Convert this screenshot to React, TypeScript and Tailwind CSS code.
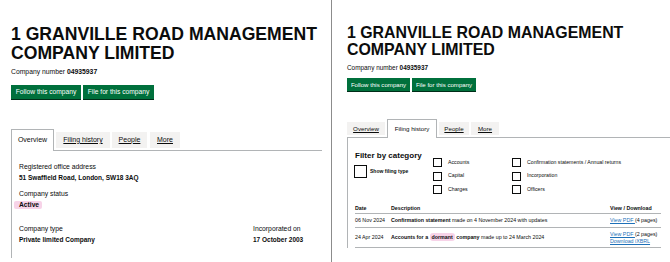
import React from 'react';

const ink = 'text-[#0b0c0c]';

function GreenButton({ label, className }: { label: string; className: string }) {
  return (
    <span
      className={`flex items-center justify-center whitespace-nowrap bg-[#00703c] text-white shadow-[0_1px_0_#002d18] ${className}`}
    >
      {label}
    </span>
  );
}

function Tab({ label, selected, className }: { label: string; selected?: boolean; className: string }) {
  if (selected) {
    return (
      <span
        className={`-mb-px flex items-center justify-center whitespace-nowrap border border-b-0 border-[#b1b4b6] bg-white ${className}`}
      >
        {label}
      </span>
    );
  }
  return (
    <span className={`flex items-center justify-center whitespace-nowrap bg-[#f3f2f1] underline underline-offset-[1px] ${className}`}>
      {label}
    </span>
  );
}

function Box({ size }: { size: string }) {
  return <span className={`shrink-0 border border-[#0b0c0c] bg-white ${size}`} />;
}

function OverviewPanel() {
  return (
    <div className="w-[331px] shrink-0 pl-[11px] pr-[9px] pt-[25px]">
      <h1 className="text-[17.6px] font-bold leading-[19px]">1 GRANVILLE ROAD MANAGEMENT COMPANY LIMITED</h1>
      <p className="mt-[4px] text-[6.8px] leading-[10px]">
        Company number <strong>04935937</strong>
      </p>
      <div className="mt-[8px] flex gap-[2px] text-[6.7px]">
        <GreenButton label="Follow this company" className="h-[14px] w-[70px]" />
        <GreenButton label="File for this company" className="h-[14px] w-[71px]" />
      </div>

      <div className="mt-[30px] flex items-end border-b border-[#b1b4b6] text-[7px]">
        <Tab label="Overview" selected className="h-[22px] w-[43px]" />
        <Tab label="Filing history" className="mb-[2px] ml-[2px] h-[16px] w-[54px]" />
        <Tab label="People" className="mb-[2px] ml-[2px] h-[16px] w-[35px]" />
        <Tab label="More" className="mb-[2px] ml-[3px] h-[16px] w-[30px]" />
      </div>

      <div className="border-l border-[#b1b4b6] pb-[13px] pl-[7px] pt-[10px] text-[6.8px] leading-[11px]">
        <div>Registered office address</div>
        <div className="text-[6.5px] font-bold">51 Swaffield Road, London, SW18 3AQ</div>
        <div className="mt-[5px]">Company status</div>
        <div className="text-[6.7px] font-bold">
          <span className="-ml-[5px] inline-block rounded-[2px] bg-[#f7d3e8] pl-[5px] pr-[3px] leading-[7.5px]">Active</span>
        </div>
        <div className="mt-[13px] flex">
          <div className="w-[234px]">
            <div>Company type</div>
            <div className="text-[6.5px] font-bold">Private limited Company</div>
          </div>
          <div>
            <div>Incorporated on</div>
            <div className="text-[6.5px] font-bold">17 October 2003</div>
          </div>
        </div>
      </div>
    </div>
  );
}

const categories = [
  ['Accounts', 'Capital', 'Charges'],
  ['Confirmation statements / Annual returns', 'Incorporation', 'Officers'],
];

function Link({ children }: { children: React.ReactNode }) {
  return <span className="text-[#1d70b8] underline underline-offset-[1px]">{children}</span>;
}

function FilingPanel() {
  return (
    <div className="min-w-0 flex-1 overflow-hidden pl-[15px] pt-[25px]">
      <div className="w-[333px]">
        <h1 className="text-[15.9px] font-bold leading-[16.5px]">1 GRANVILLE ROAD MANAGEMENT COMPANY LIMITED</h1>
        <p className="mt-[5px] text-[6.4px] leading-[9px]">
          Company number <strong>04935937</strong>
        </p>
        <div className="mt-[6px] flex gap-[2px] text-[6.1px]">
          <GreenButton label="Follow this company" className="h-[13px] w-[63px]" />
          <GreenButton label="File for this company" className="h-[13px] w-[64px]" />
        </div>

        <div className="mt-[28px] flex items-end border-b border-[#b1b4b6] text-[6.2px]">
          <Tab label="Overview" className="mb-[2px] h-[13px] w-[38px]" />
          <Tab label="Filing history" selected className="ml-[2px] h-[19px] w-[50px]" />
          <Tab label="People" className="mb-[2px] ml-[2px] h-[13px] w-[30px]" />
          <Tab label="More" className="mb-[2px] ml-[2px] h-[13px] w-[28px]" />
        </div>

        <div className="border-l border-[#b1b4b6] pl-[7px] pr-[19px] pt-[13px]">
          <div className="flex">
            <div className="w-[78px] shrink-0">
              <h2 className="text-[8px] font-bold leading-[10px]">Filter by category</h2>
              <div className="mt-[4px] flex items-center gap-[3px]">
                <Box size="h-[13px] w-[13px] -ml-px" />
                <span className="text-[5px] font-bold leading-[7px]">Show filing type</span>
              </div>
            </div>
            {categories.map((col, i) => (
              <div key={i} className={`mt-[7px] flex flex-col gap-[4.5px] ${i === 0 ? 'w-[79px]' : ''}`}>
                {col.map((c) => (
                  <div key={c} className="flex h-[9px] items-center gap-[6px]">
                    <Box size="h-[9px] w-[9px]" />
                    <span className="whitespace-nowrap text-[5.2px]">{c}</span>
                  </div>
                ))}
              </div>
            ))}
          </div>

          <div className="mt-[9px] text-[5.3px] leading-[7px]">
            <div className="grid h-[11px] grid-cols-[36px_219px_51px] items-center border-b border-[#b1b4b6] font-bold">
              <span>Date</span>
              <span>Description</span>
              <span>View / Download</span>
            </div>
            <div className="grid h-[14px] grid-cols-[36px_219px_51px] items-center border-b border-[#b1b4b6]">
              <span>06 Nov 2024</span>
              <span>
                <strong>Confirmation statement</strong> made on 4 November 2024 with updates
              </span>
              <span className="whitespace-nowrap">
                <Link>View PDF </Link>(4 pages)
              </span>
            </div>
            <div className="grid h-[20px] grid-cols-[36px_219px_51px] items-center border-b border-[#b1b4b6]">
              <span>24 Apr 2024</span>
              <span>
                <strong>
                  Accounts for a{' '}
                  <span className="rounded-[3px] bg-[#f7d3e8] px-[2px] py-[1px]">dormant</span> company
                </strong>{' '}
                made up to 24 March 2024
              </span>
              <span className="whitespace-nowrap">
                <Link>View PDF </Link>(2 pages)
                <br />
                <Link>Download iXBRL</Link>
              </span>
            </div>
          </div>
        </div>
      </div>
    </div>
  );
}

export default function App() {
  return (
    <div className={`flex h-[262px] w-[670px] overflow-hidden bg-white font-['Liberation_Sans',Arial,sans-serif] ${ink}`}>
      <OverviewPanel />
      <div className="w-px shrink-0 bg-[#8c8c8c]" />
      <FilingPanel />
    </div>
  );
}
